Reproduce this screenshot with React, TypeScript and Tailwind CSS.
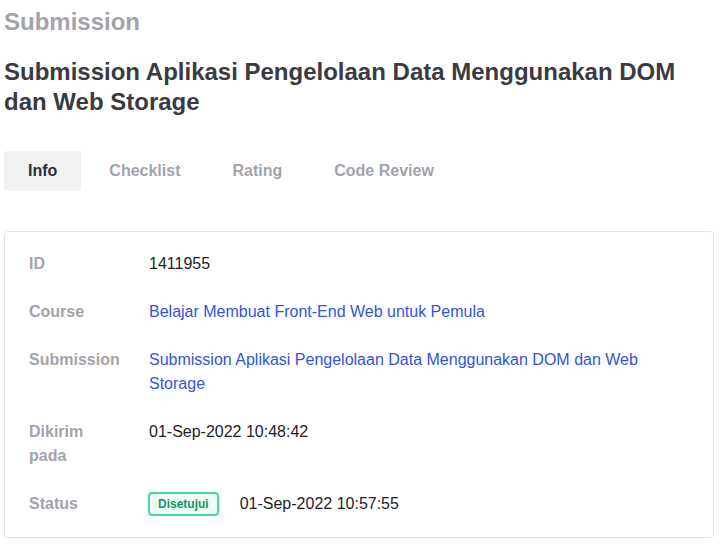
import React from "react";

export default function App() {
  const font = { fontFamily: '"Liberation Sans", Arial, sans-serif' };
  return (
    <div className="w-[726px] h-[547px] bg-white overflow-hidden" style={font}>
      <div className="pl-[4px] pr-[12px]">
        <div className="pt-[8px] text-[24px] leading-[28px] font-bold text-[#a3a3ab]">Submission</div>
        <h1 className="mt-[21px] text-[24px] leading-[30px] font-bold text-[#3a3a42] pr-[20px]">
          Submission Aplikasi Pengelolaan Data Menggunakan DOM dan Web Storage
        </h1>
        <div className="mt-[34px] flex gap-[4px]">
          <div className="h-[40px] px-[24px] flex items-center rounded-[3px] bg-[#f2f2f2] text-[16px] font-bold text-[#2e2e36]">Info</div>
          <div className="h-[40px] px-[24px] flex items-center text-[16px] font-bold text-[#a3a3ab]">Checklist</div>
          <div className="h-[40px] px-[24px] flex items-center text-[16px] font-bold text-[#a3a3ab]">Rating</div>
          <div className="h-[40px] px-[24px] flex items-center text-[16px] font-bold text-[#a3a3ab]">Code Review</div>
        </div>
        <div className="mt-[40px] w-[710px] h-[307px] border border-[#e3e3e3] rounded-[4px] px-[24px] pt-[20px] flex flex-col gap-[24px] text-[16px] leading-[24px]">
          <div className="flex">
            <div className="w-[120px] shrink-0 font-bold text-[#a3a3ab]">ID</div>
            <div className="text-[#1e1e24]">1411955</div>
          </div>
          <div className="flex">
            <div className="w-[120px] shrink-0 font-bold text-[#a3a3ab]">Course</div>
            <div className="text-[#2f55e0]">Belajar Membuat Front-End Web untuk Pemula</div>
          </div>
          <div className="flex">
            <div className="w-[120px] shrink-0 font-bold text-[#a3a3ab]">Submission</div>
            <div className="text-[#2f55e0] w-[500px]">Submission Aplikasi Pengelolaan Data Menggunakan DOM dan Web Storage</div>
          </div>
          <div className="flex">
            <div className="w-[120px] shrink-0 font-bold text-[#a3a3ab] pr-[50px]">Dikirim pada</div>
            <div className="text-[#1e1e24]">01-Sep-2022 10:48:42</div>
          </div>
          <div className="flex items-center">
            <div className="w-[120px] shrink-0 font-bold text-[#a3a3ab]">Status</div>
            <div className="-ml-[1px] h-[24px] px-[8px] flex items-center rounded-[4px] border-2 border-[#45d6a3] bg-[#ecfbf4] text-[12px] font-bold text-[#12976a]">Disetujui</div>
            <div className="ml-[21px] text-[#1e1e24]">01-Sep-2022 10:57:55</div>
          </div>
        </div>
      </div>
    </div>
  );
}
